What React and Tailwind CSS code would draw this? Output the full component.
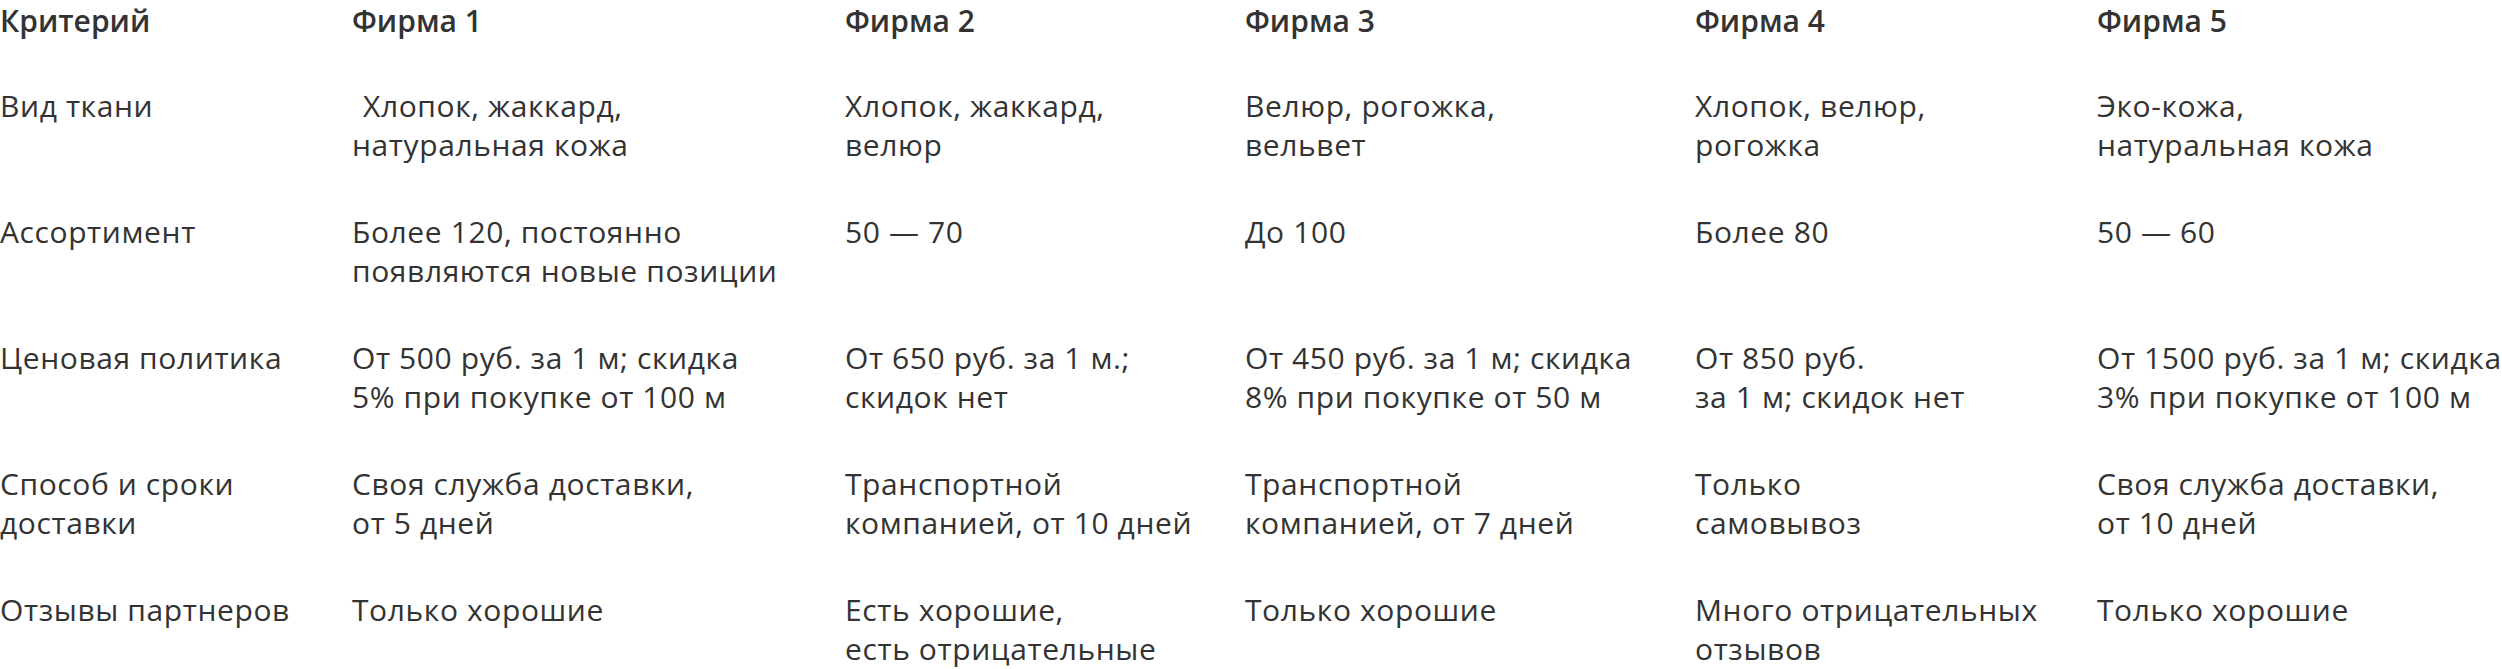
import React from "react";

const COLS = "grid grid-cols-[352px_493px_400px_450px_402px_405px]";

const header = ["Критерий", "Фирма 1", "Фирма 2", "Фирма 3", "Фирма 4", "Фирма 5"];

const rows = [
  [
    ["Вид ткани"],
    ["Хлопок, жаккард,", "натуральная кожа"],
    ["Хлопок, жаккард,", "велюр"],
    ["Велюр, рогожка,", "вельвет"],
    ["Хлопок, велюр,", "рогожка"],
    ["Эко-кожа,", "натуральная кожа"],
  ],
  [
    ["Ассортимент"],
    ["Более 120, постоянно", "появляются новые позиции"],
    ["50 — 70"],
    ["До 100"],
    ["Более 80"],
    ["50 — 60"],
  ],
  [
    ["Ценовая политика"],
    ["От 500 руб. за 1 м; скидка", "5% при покупке от 100 м"],
    ["От 650 руб. за 1 м.;", "скидок нет"],
    ["От 450 руб. за 1 м; скидка", "8% при покупке от 50 м"],
    ["От 850 руб.", "за 1 м; скидок нет"],
    ["От 1500 руб. за 1 м; скидка", "3% при покупке от 100 м"],
  ],
  [
    ["Способ и сроки", "доставки"],
    ["Своя служба доставки,", "от 5 дней"],
    ["Транспортной", "компанией, от 10 дней"],
    ["Транспортной", "компанией, от 7 дней"],
    ["Только", "самовывоз"],
    ["Своя служба доставки,", "от 10 дней"],
  ],
  [
    ["Отзывы партнеров"],
    ["Только хорошие"],
    ["Есть хорошие,", "есть отрицательные"],
    ["Только хорошие"],
    ["Много отрицательных", "отзывов"],
    ["Только хорошие"],
  ],
];

export default function App() {
  return (
    <div className="w-[2502px] h-[669px] bg-white overflow-hidden font-['Open_Sans',sans-serif] text-[30px] leading-[39px] text-[#333333] pt-[1px]">
      <div className={`${COLS} font-semibold mb-[46px]`}>
        {header.map((h) => (
          <div key={h} className="whitespace-nowrap">{h}</div>
        ))}
      </div>
      <div className="flex flex-col gap-[48px] tracking-[0.6px]">
        {rows.map((row, i) => (
          <div key={i} className={COLS}>
            {row.map((cell, j) => (
              <div key={j} className="whitespace-nowrap">
                {cell.map((line, k) => (
                  <div key={k} className={i === 0 && j === 1 && k === 0 ? "pl-[11px]" : ""}>
                    {line}
                  </div>
                ))}
              </div>
            ))}
          </div>
        ))}
      </div>
    </div>
  );
}
